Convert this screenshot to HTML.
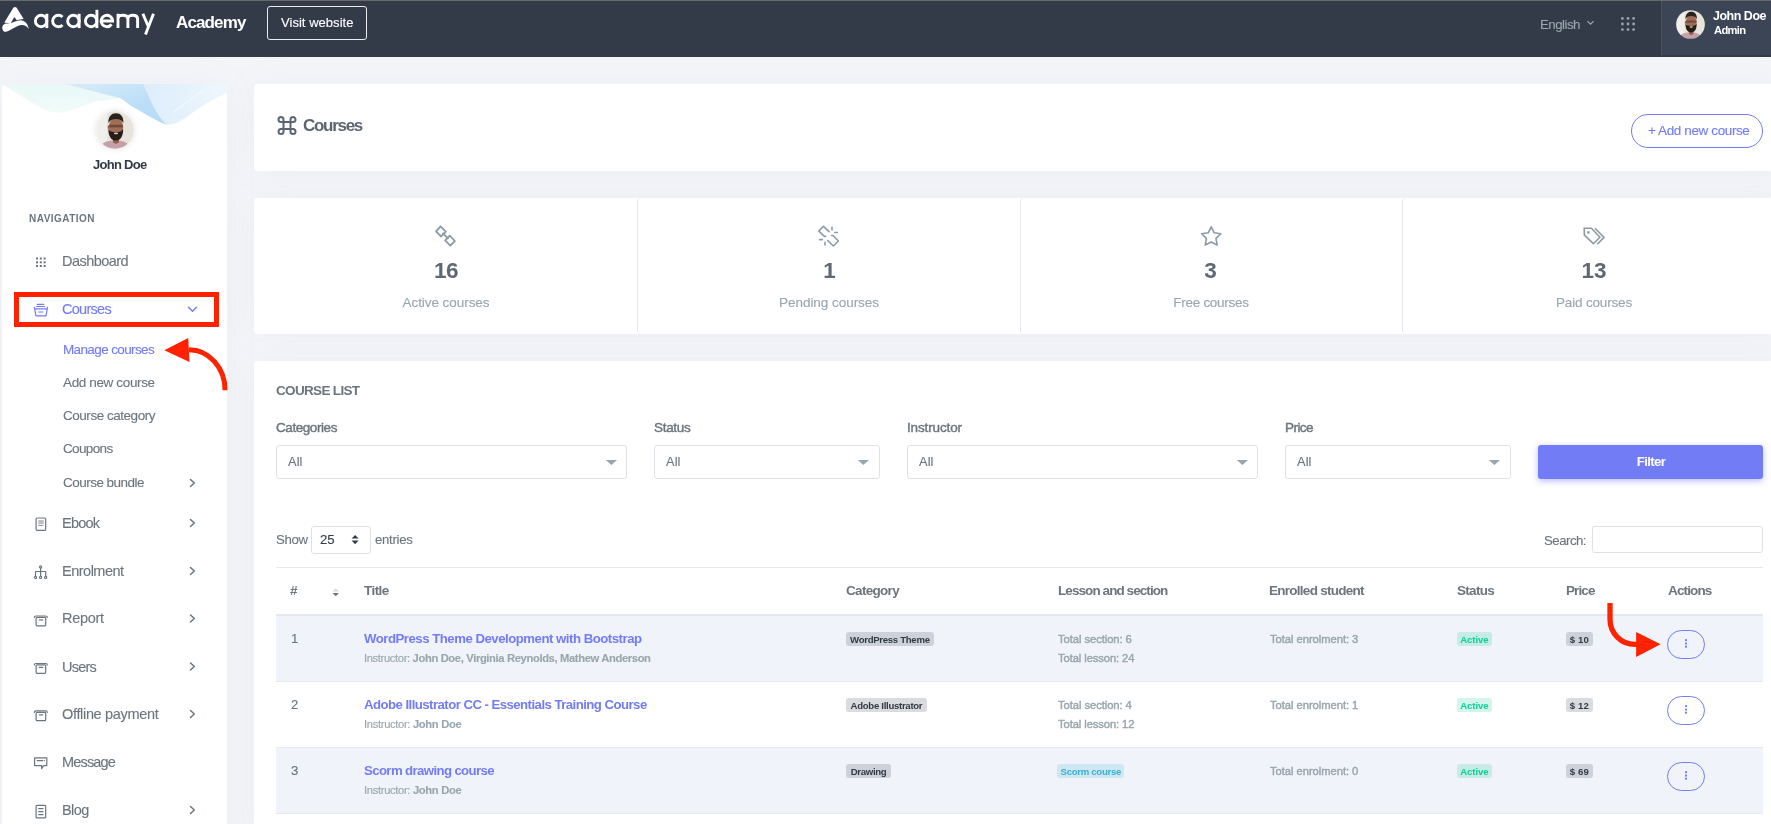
<!DOCTYPE html>
<html><head><meta charset="utf-8"><title>Courses</title>
<style>
html,body{margin:0;padding:0;}
body{width:1771px;height:824px;overflow:hidden;position:relative;background:#f4f5f9;font-family:'Liberation Sans', sans-serif;}
.t{position:absolute;white-space:nowrap;will-change:transform;}
.a{position:absolute;}
</style></head><body>
<!-- header -->
<div class="a" style="left:0;top:0;width:1771px;height:57px;background:#333a48"></div>
<div class="a" style="left:0;top:0;width:1771px;height:1px;background:#6b6866"></div>
<div class="a" style="left:1661px;top:1px;width:110px;height:54px;background:#3c4555;border-left:1px solid #46505f;box-sizing:border-box"></div>
<svg class="a" style="left:0;top:0" width="36" height="36" viewBox="0 0 36 36">
  <path fill="#fff" d="M15 7.1 C16.1 7.1 16.8 7.8 17.4 8.9 L23.7 19.1 C21.2 19.2 18.8 19.7 16.7 20.3 L14.4 16.9 L10.6 23.4 C8.4 23.2 6.3 22.8 4.3 22.6 L12.6 8.9 C13.2 7.8 13.9 7.1 15 7.1 Z"/>
  <path fill="#fff" d="M2.3 28.2 C2.1 25.2 4.2 23.4 7.2 23.5 C12.5 23.7 16.8 20 21.6 20.4 C25.6 20.8 28.2 24.5 28.8 29 C27 26.6 24.6 25 21.6 25.1 C16.6 25.3 11.2 30.6 6.2 31.8 C4.1 32.1 2.5 30.6 2.3 28.2 Z"/>
</svg>
<div class="a" style="left:267px;top:6px;width:100px;height:34px;border:1.3px solid #e9ebef;border-radius:3px;box-sizing:border-box"></div>
<!-- english chevron -->
<svg class="a" style="left:1586px;top:19px" width="10" height="8" viewBox="0 0 10 8"><path d="M1.5 2.3 L4.5 5.2 L7.5 2.3" fill="none" stroke="#98a6ad" stroke-width="1.2"/></svg>
<!-- grid dots -->
<svg class="a" style="left:1618px;top:14px" width="22" height="22" viewBox="0 0 22 22" fill="#98a6ad">
  <circle cx="4.4" cy="4.4" r="1.4"/><circle cx="10" cy="4.4" r="1.4"/><circle cx="15.6" cy="4.4" r="1.4"/>
  <circle cx="4.4" cy="10" r="1.4"/><circle cx="10" cy="10" r="1.4"/><circle cx="15.6" cy="10" r="1.4"/>
  <circle cx="4.4" cy="15.6" r="1.4"/><circle cx="10" cy="15.6" r="1.4"/><circle cx="15.6" cy="15.6" r="1.4"/>
</svg>
<!-- header avatar -->
<svg class="a" style="left:1676px;top:10px" width="29" height="29" viewBox="0 0 38 38">
  <defs><clipPath id="cav1"><circle cx="19" cy="19" r="18.8"/></clipPath><filter id="fav1" x="-5%" y="-5%" width="110%" height="110%"><feGaussianBlur stdDeviation="0.45"/></filter></defs>
  <g clip-path="url(#cav1)"><g filter="url(#fav1)">
    <rect width="38" height="38" fill="#e7e3dd"/>
    <rect x="0" y="0" width="11" height="38" fill="#f1efeb"/>
    <path d="M3 38 C5 32 10 29.5 19 29.5 C28 29.5 33 32 35 38 Z" fill="#c6a0a9"/>
    <path d="M17 27 H23 V31.5 L20 33 L17 31.5 Z" fill="#94644f"/>
    <ellipse cx="20" cy="15.5" rx="7.2" ry="8.6" fill="#a26d56"/>
    <ellipse cx="12.8" cy="16" rx="1.2" ry="2" fill="#9a6650"/>
    <path d="M12.4 12 C12.2 5.5 15.5 2.2 20 2.2 C24.8 2.2 27.6 5.5 27.4 12 C26 9.2 23.5 8 20 8 C16.5 8 13.8 9.2 12.4 12 Z" fill="#2a201c"/>
    <path d="M13.6 13.9 H26.8 V16.4 H13.6 Z" fill="#5a3d31" opacity=".75"/>
    <path d="M12.4 17.5 C12.2 25 15 29.6 19.8 29.6 C24.8 29.6 27.4 25 27.1 17.5 C26 20.6 23.5 21 19.8 21 C16 21 13.4 20.6 12.4 17.5 Z" fill="#2a1d18"/>
    <ellipse cx="20" cy="22.3" rx="2.2" ry="0.9" fill="#ddd3cc"/>
  </g></g>
</svg>

<!-- sidebar card -->
<div class="a" style="left:2px;top:84px;width:225px;height:760px;background:#fff;border-radius:4px;box-shadow:0 0 35px 0 rgba(154,161,171,.07);overflow:hidden">
  <svg class="a" style="left:0;top:0" width="225" height="50" viewBox="2 84 225 50">
    <defs>
      <linearGradient id="gm" x1="0" y1="0" x2="0" y2="1">
        <stop offset="0" stop-color="#e9f8f6"/><stop offset="1" stop-color="#f1fbfa"/>
      </linearGradient>
      <linearGradient id="gb" x1="0" y1="0" x2="1" y2="1">
        <stop offset="0" stop-color="#d9ecfa"/><stop offset=".6" stop-color="#bcdff7"/><stop offset="1" stop-color="#b5dbf6"/>
      </linearGradient>
      <linearGradient id="gl" x1="0" y1="0" x2="1" y2="0">
        <stop offset="0" stop-color="#dcedfb"/><stop offset="1" stop-color="#eef7fd"/>
      </linearGradient>
    </defs>
    <path d="M2 84 L64 84 L120 98 C110 100 102 101 95 101.6 C88 104 80 107.5 74.5 109 C68 111.5 62 113 57.6 112.8 C52 112.5 46 110.5 40.7 107.7 C32 103 26 99 20.3 95.5 C13 91 7 87 2 84 Z" fill="url(#gm)"/>
    <path d="M64 84 L143.6 84 L152 103 C156 111 160 118 166.5 124.6 C163 123.5 159 121.8 156 120 C147 115 139 110.5 131 105.7 C127 103 123.5 100 120 98 Z" fill="url(#gb)"/>
    <path d="M143.6 84 L227 84 L227 93 C219 97 213 100 207 103 C199 108 192 113 186 117.6 C180 121.5 174 124.5 169 124.8 C168 124.8 167 124.7 166.5 124.6 C160 118 156 111 152 103 Z" fill="url(#gl)"/>
    <path d="M173 112.5 C185 104 195 96 204 90" fill="none" stroke="#ffffff" stroke-width=".8" opacity=".8"/>
  </svg>
</div>
<!-- sidebar avatar -->
<div class="a" style="left:96px;top:111px;width:38px;height:38px;border-radius:50%;box-shadow:0 0 6px rgba(0,0,0,.12)"></div>
<svg class="a" style="left:96px;top:111px" width="38" height="38" viewBox="0 0 38 38">
  <defs><clipPath id="cav2"><circle cx="19" cy="19" r="18.8"/></clipPath><filter id="fav2" x="-5%" y="-5%" width="110%" height="110%"><feGaussianBlur stdDeviation="0.45"/></filter></defs>
  <g clip-path="url(#cav2)"><g filter="url(#fav2)">
    <rect width="38" height="38" fill="#e7e3dd"/>
    <rect x="0" y="0" width="11" height="38" fill="#f1efeb"/>
    <path d="M3 38 C5 32 10 29.5 19 29.5 C28 29.5 33 32 35 38 Z" fill="#c6a0a9"/>
    <path d="M17 27 H23 V31.5 L20 33 L17 31.5 Z" fill="#94644f"/>
    <ellipse cx="20" cy="15.5" rx="7.2" ry="8.6" fill="#a26d56"/>
    <ellipse cx="12.8" cy="16" rx="1.2" ry="2" fill="#9a6650"/>
    <path d="M12.4 12 C12.2 5.5 15.5 2.2 20 2.2 C24.8 2.2 27.6 5.5 27.4 12 C26 9.2 23.5 8 20 8 C16.5 8 13.8 9.2 12.4 12 Z" fill="#2a201c"/>
    <path d="M13.6 13.9 H26.8 V16.4 H13.6 Z" fill="#5a3d31" opacity=".75"/>
    <path d="M12.4 17.5 C12.2 25 15 29.6 19.8 29.6 C24.8 29.6 27.4 25 27.1 17.5 C26 20.6 23.5 21 19.8 21 C16 21 13.4 20.6 12.4 17.5 Z" fill="#2a1d18"/>
    <ellipse cx="20" cy="22.3" rx="2.2" ry="0.9" fill="#ddd3cc"/>
  </g></g>
</svg>

<!-- nav icons -->
<svg class="a" style="left:30px;top:250px" width="22" height="580" viewBox="0 0 22 580" fill="none" stroke="#6c757d" stroke-width="1.2" stroke-linecap="round" stroke-linejoin="round">
  <!-- dashboard dots: y offset 250 -->
  <g fill="#6c757d" stroke="none">
    <rect x="6" y="7.5" width="2" height="2"/><rect x="9.8" y="7.5" width="2" height="2"/><rect x="13.6" y="7.5" width="2" height="2"/>
    <rect x="6" y="11.3" width="2" height="2"/><rect x="9.8" y="11.3" width="2" height="2"/><rect x="13.6" y="11.3" width="2" height="2"/>
    <rect x="6" y="15" width="2" height="2"/><rect x="9.8" y="15" width="2" height="2"/><rect x="13.6" y="15" width="2" height="2"/>
  </g>
  <!-- ebook: y 518..530 -->
  <rect x="6.1" y="268" width="9.6" height="12.3" rx="1"/>
  <path d="M8.8 271 H13.3 M8.6 273 H13.5 M8.8 275.4 H11.5 M12.6 275.4 H12.9" stroke-width="0.9"/>
  <!-- enrolment -->
  <circle cx="10.6" cy="317" r="1.1"/>
  <path d="M10.6 318.1 V326.3 M5.5 326.3 V321.5 H15.7 V326.3"/>
  <circle cx="5.5" cy="327.4" r="1.1"/><circle cx="10.6" cy="327.4" r="1.1"/><circle cx="15.7" cy="327.4" r="1.1"/>
  <!-- report -->
  <path d="M4.3 367.5 C4.3 366.4 4.8 366 6 366 H15.6 C16.8 366 17.3 366.4 17.3 367.5"/>
  <rect x="6.1" y="367.4" width="9.6" height="8.4" rx="1"/>
  <path d="M9.3 369.9 H12.7"/>
  <!-- users -->
  <path d="M4.3 415 C4.3 413.9 4.8 413.5 6 413.5 H15.6 C16.8 413.5 17.3 413.9 17.3 415"/>
  <rect x="6.1" y="414.9" width="9.6" height="8.4" rx="1"/>
  <path d="M9.3 417.4 H12.7"/>
  <!-- offline payment -->
  <path d="M4.3 462.4 C4.3 461.3 4.8 460.9 6 460.9 H15.6 C16.8 460.9 17.3 461.3 17.3 462.4"/>
  <rect x="6.1" y="462.3" width="9.6" height="8.4" rx="1"/>
  <path d="M9.3 464.8 H12.7"/>
  <!-- message -->
  <path d="M4.6 507.8 H16.8 V515.6 H13.6 L11.6 518.6 V515.6 H4.6 Z"/>
  <path d="M7.2 510.6 H12.6 M14.2 510.6 H14.4"/>
  <!-- blog -->
  <rect x="6.1" y="555.3" width="9.6" height="12.6" rx="1"/>
  <path d="M8.7 558.6 H13 M8.7 561.7 H13 M8.7 564.7 H13"/>
</svg>
<!-- courses basket icon (purple) -->
<svg class="a" style="left:30px;top:300px" width="22" height="20" viewBox="0 0 22 20" fill="none" stroke="#727cf5" stroke-width="1.2" stroke-linecap="round" stroke-linejoin="round">
  <path d="M7.3 4.4 H13.7 M6.5 6.5 H14.6"/>
  <path d="M4.3 7.3 L4.6 8.8 H17.2 L17.5 7.3 M4.6 8.8 L6 15.8 H16 L17.2 8.8"/>
  <path d="M8.6 12 H12.9"/>
</svg>
<!-- chevrons -->
<svg class="a" style="left:185px;top:300px" width="16" height="200" viewBox="0 0 16 200" fill="none" stroke="#727cf5" stroke-width="1.5" stroke-linecap="round" stroke-linejoin="round">
  <path d="M3.5 7.3 L7.5 11.3 L11.5 7.3"/>
</svg>
<svg class="a" style="left:185px;top:470px" width="16" height="360" viewBox="0 0 16 360" fill="none" stroke="#6c757d" stroke-width="1.5" stroke-linecap="round" stroke-linejoin="round">
  <path d="M5.5 9.5 L9.3 13 L5.5 16.5"/>
  <path d="M5.5 49.5 L9.3 53 L5.5 56.5"/>
  <path d="M5.5 97.5 L9.3 101 L5.5 104.5"/>
  <path d="M5.5 145 L9.3 148.5 L5.5 152"/>
  <path d="M5.5 193 L9.3 196.5 L5.5 200"/>
  <path d="M5.5 240.5 L9.3 244 L5.5 247.5"/>
  <path d="M5.5 336.5 L9.3 340 L5.5 343.5"/>
</svg>
<!-- red box + arrow -->
<div class="a" style="left:14px;top:292px;width:205px;height:35px;border:5px solid #fe2200;box-sizing:border-box"></div>


<!-- main header card -->
<div class="a" style="left:254px;top:84px;width:1530px;height:87px;background:#fff;border-radius:4px;box-shadow:0 0 35px 0 rgba(154,161,171,.07)"></div>
<svg class="a" style="left:276px;top:115px" width="22" height="22" viewBox="0 0 22 22" fill="none" stroke="#5b6672" stroke-width="2">
  <path d="M7.5 7 H14.5 V14 H7.5 Z M7.5 7 V4.5 A2.5 2.5 0 1 0 5 7 Z M14.5 7 V4.5 A2.5 2.5 0 1 1 17 7 Z M14.5 14 V16.5 A2.5 2.5 0 1 0 17 14 Z M7.5 14 V16.5 A2.5 2.5 0 1 1 5 14 Z"/>
</svg>
<div class="a" style="left:1631px;top:114px;width:132px;height:34px;border:1px solid #727cf5;border-radius:17px;box-sizing:border-box"></div>

<!-- stats card -->
<div class="a" style="left:254px;top:198px;width:1530px;height:136px;background:#fff;border-radius:4px;box-shadow:0 0 35px 0 rgba(154,161,171,.07)"></div>
<div class="a" style="left:637px;top:198px;width:8px;height:136px;border-left:1px solid #e3e6ea;border-radius:4px 0 0 4px"></div>
<div class="a" style="left:1020px;top:198px;width:8px;height:136px;border-left:1px solid #e3e6ea;border-radius:4px 0 0 4px"></div>
<div class="a" style="left:1402px;top:198px;width:8px;height:136px;border-left:1px solid #e3e6ea;border-radius:4px 0 0 4px"></div>
<svg class="a" style="left:428px;top:220px" width="34" height="32" viewBox="0 0 34 32" fill="none" stroke="#8d9ba4" stroke-width="1.8" stroke-linejoin="round">
  <path d="M12.6 6.4 L17.8 11.6 L13.2 16.5 L8 11.3 Z"/>
  <path d="M21.7 15.6 L26.9 21 L22.3 25.6 L17.2 20.4 Z"/>
  <path d="M14.6 12.8 L20.4 18.8"/>
</svg>
<svg class="a" style="left:812px;top:220px" width="34" height="32" viewBox="0 0 34 32" fill="none" stroke="#8d9ba4" stroke-width="1.6" stroke-linejoin="round" stroke-linecap="round">
  <path d="M17 11.6 L11.45 6.3 L6.8 11.1 L12.4 16.4 H13.6"/>
  <path d="M19.6 15.5 H21 L26.4 21 L21.4 26 L15.8 20.6"/>
  <path d="M20 7.2 V9.9 M22.7 12.5 H25.4 M7.6 19.6 H10.3 M13 22.3 V25"/>
</svg>
<svg class="a" style="left:1194px;top:220px" width="34" height="32" viewBox="0 0 34 32">
  <g transform="translate(5.68 4.88) scale(0.96)">
  <path d="M12 2 L15.09 8.26 L22 9.27 L17 14.14 L18.18 21.02 L12 17.77 L5.82 21.02 L7 14.14 L2 9.27 L8.91 8.26 Z" fill="none" stroke="#8d9ba4" stroke-width="1.7" stroke-linejoin="round"/>
  </g>
</svg>
<svg class="a" style="left:1576px;top:220px" width="34" height="32" viewBox="0 0 34 32" fill="none" stroke="#8d9ba4" stroke-width="1.6" stroke-linejoin="miter">
  <path d="M8.2 8.2 H15.4 L23.9 17.2 L17.4 23.7 L8.4 15.1 Z"/>
  <circle cx="12.4" cy="12.4" r="1.3" fill="#8d9ba4" stroke="none"/>
  <path d="M19 8.2 L28 17.4 L21.2 24.2"/>
</svg>

<!-- course list card -->
<div class="a" style="left:254px;top:361px;width:1530px;height:480px;background:#fff;border-radius:4px;box-shadow:0 0 35px 0 rgba(154,161,171,.07)"></div>
<!-- selects -->
<div class="a" style="left:276px;top:445px;width:351px;height:34px;border:1px solid #dee2e6;border-radius:3px;box-sizing:border-box"></div>
<div class="a" style="left:654px;top:445px;width:226px;height:34px;border:1px solid #dee2e6;border-radius:3px;box-sizing:border-box"></div>
<div class="a" style="left:907px;top:445px;width:351px;height:34px;border:1px solid #dee2e6;border-radius:3px;box-sizing:border-box"></div>
<div class="a" style="left:1285px;top:445px;width:226px;height:34px;border:1px solid #dee2e6;border-radius:3px;box-sizing:border-box"></div>
<svg class="a" style="left:0;top:455px" width="1771" height="14" viewBox="0 0 1771 14" fill="#98a6ad">
  <path d="M605.8 5 H617 L611.4 10 Z"/>
  <path d="M857.8 5 H869 L863.4 10 Z"/>
  <path d="M1236.8 5 H1248 L1242.4 10 Z"/>
  <path d="M1488.8 5 H1500 L1494.4 10 Z"/>
</svg>
<div class="a" style="left:1538px;top:445px;width:225px;height:34px;background:#727cf5;border-radius:3px;box-shadow:0 2px 6px 0 rgba(114,124,245,.5)"></div>
<!-- show select -->
<div class="a" style="left:311px;top:526px;width:60px;height:28px;border:1px solid #dee2e6;border-radius:3px;box-sizing:border-box"></div>
<svg class="a" style="left:348px;top:532px" width="14" height="16" viewBox="0 0 14 16" fill="#313a46">
  <path d="M3.6 6.6 H10.6 L7.1 3 Z"/><path d="M3.6 8.6 H10.6 L7.1 12.2 Z"/>
</svg>
<div class="a" style="left:1592px;top:526px;width:171px;height:27px;border:1px solid #dee2e6;border-radius:3px;box-sizing:border-box"></div>

<!-- table -->
<div class="a" style="left:276px;top:567px;width:1487px;height:1px;background:#e6eaf0"></div>
<div class="a" style="left:276px;top:614px;width:1487px;height:2px;background:#e3e7ee"></div>
<div class="a" style="left:276px;top:616px;width:1487px;height:65px;background:#f1f3fa"></div>
<div class="a" style="left:276px;top:681px;width:1487px;height:1px;background:#e6eaf0"></div>
<div class="a" style="left:276px;top:747px;width:1487px;height:1px;background:#e6eaf0"></div>
<div class="a" style="left:276px;top:748px;width:1487px;height:65px;background:#f1f3fa"></div>
<div class="a" style="left:276px;top:813px;width:1487px;height:1px;background:#e6eaf0"></div>
<svg class="a" style="left:330px;top:585px" width="12" height="14" viewBox="0 0 12 14">
  <path d="M2.5 6.5 H9 L5.75 3.3 Z" fill="#d8dce2"/><path d="M2.5 8 H9 L5.75 11.3 Z" fill="#6c757d"/>
</svg>

<div class="t" style="left:175.5px;top:14.00px;font-size:17px;line-height:17px;font-weight:700;color:#ffffff;letter-spacing:-0.873px;">Academy</div>
<div class="t" style="left:280.5px;top:16.20px;font-size:13px;line-height:13px;font-weight:400;color:#ffffff;-webkit-text-stroke:0.12px currentColor;letter-spacing:0.037px;">Visit website</div>
<div class="t" style="left:1540.0px;top:17.85px;font-size:13.3px;line-height:13.3px;font-weight:400;color:#98a6ad;-webkit-text-stroke:0.12px currentColor;letter-spacing:-0.518px;">English</div>
<div class="t" style="left:1713.0px;top:9.55px;font-size:12.5px;line-height:12.5px;font-weight:700;color:#ffffff;letter-spacing:-0.494px;">John Doe</div>
<div class="t" style="left:1714.0px;top:25.10px;font-size:11.2px;line-height:11.2px;font-weight:700;color:#ffffff;letter-spacing:-0.683px;">Admin</div>
<div class="t" style="left:93.0px;top:158.00px;font-size:13px;line-height:13px;font-weight:700;color:#313a46;letter-spacing:-0.717px;">John Doe</div>
<div class="t" style="left:29.3px;top:213.50px;font-size:10px;line-height:10px;font-weight:700;color:#6c757d;letter-spacing:0.470px;">NAVIGATION</div>
<div class="t" style="left:62.4px;top:254.05px;font-size:14.5px;line-height:14.5px;font-weight:400;color:#6c757d;-webkit-text-stroke:0.12px currentColor;letter-spacing:-0.549px;">Dashboard</div>
<div class="t" style="left:62.2px;top:301.75px;font-size:14.5px;line-height:14.5px;font-weight:400;color:#727cf5;-webkit-text-stroke:0.12px currentColor;letter-spacing:-0.714px;">Courses</div>
<div class="t" style="left:63.3px;top:343.15px;font-size:13.5px;line-height:13.5px;font-weight:400;color:#727cf5;-webkit-text-stroke:0.12px currentColor;letter-spacing:-0.629px;">Manage courses</div>
<div class="t" style="left:63.3px;top:375.95px;font-size:13.5px;line-height:13.5px;font-weight:400;color:#6c757d;-webkit-text-stroke:0.12px currentColor;letter-spacing:-0.365px;">Add new course</div>
<div class="t" style="left:63.3px;top:408.75px;font-size:13.5px;line-height:13.5px;font-weight:400;color:#6c757d;-webkit-text-stroke:0.12px currentColor;letter-spacing:-0.471px;">Course category</div>
<div class="t" style="left:63.3px;top:441.75px;font-size:13.5px;line-height:13.5px;font-weight:400;color:#6c757d;-webkit-text-stroke:0.12px currentColor;letter-spacing:-0.635px;">Coupons</div>
<div class="t" style="left:63.3px;top:475.75px;font-size:13.5px;line-height:13.5px;font-weight:400;color:#6c757d;-webkit-text-stroke:0.12px currentColor;letter-spacing:-0.524px;">Course bundle</div>
<div class="t" style="left:62.3px;top:515.95px;font-size:14.5px;line-height:14.5px;font-weight:400;color:#6c757d;-webkit-text-stroke:0.12px currentColor;letter-spacing:-0.765px;">Ebook</div>
<div class="t" style="left:62.3px;top:563.75px;font-size:14.5px;line-height:14.5px;font-weight:400;color:#6c757d;-webkit-text-stroke:0.12px currentColor;letter-spacing:-0.499px;">Enrolment</div>
<div class="t" style="left:62.3px;top:611.45px;font-size:14.5px;line-height:14.5px;font-weight:400;color:#6c757d;-webkit-text-stroke:0.12px currentColor;letter-spacing:-0.322px;">Report</div>
<div class="t" style="left:62.3px;top:660.15px;font-size:14.5px;line-height:14.5px;font-weight:400;color:#6c757d;-webkit-text-stroke:0.12px currentColor;letter-spacing:-0.775px;">Users</div>
<div class="t" style="left:62.3px;top:706.95px;font-size:14.5px;line-height:14.5px;font-weight:400;color:#6c757d;-webkit-text-stroke:0.12px currentColor;letter-spacing:-0.326px;">Offline payment</div>
<div class="t" style="left:62.3px;top:754.95px;font-size:14.5px;line-height:14.5px;font-weight:400;color:#6c757d;-webkit-text-stroke:0.12px currentColor;letter-spacing:-0.835px;">Message</div>
<div class="t" style="left:62.3px;top:802.95px;font-size:14.5px;line-height:14.5px;font-weight:400;color:#6c757d;-webkit-text-stroke:0.12px currentColor;letter-spacing:-0.558px;">Blog</div>
<div class="t" style="left:303.0px;top:116.80px;font-size:17px;line-height:17px;font-weight:700;color:#5b6672;letter-spacing:-1.290px;">Courses</div>
<div class="t" style="left:1647.5px;top:124.15px;font-size:13.5px;line-height:13.5px;font-weight:400;color:#727cf5;-webkit-text-stroke:0.12px currentColor;letter-spacing:-0.388px;">+ Add new course</div>
<div class="t" style="left:445.5px;top:260.45px;font-size:22.5px;line-height:22.5px;font-weight:700;color:#5d6874;letter-spacing:-0.516px;transform:translateX(-50%);">16</div>
<div class="t" style="left:445.5px;top:295.55px;font-size:13.5px;line-height:13.5px;font-weight:400;color:#98a6ad;-webkit-text-stroke:0.12px currentColor;letter-spacing:-0.057px;transform:translateX(-50%);">Active courses</div>
<div class="t" style="left:828.5px;top:260.45px;font-size:22.5px;line-height:22.5px;font-weight:700;color:#5d6874;letter-spacing:-1.116px;transform:translateX(-50%);">1</div>
<div class="t" style="left:828.5px;top:295.55px;font-size:13.5px;line-height:13.5px;font-weight:400;color:#98a6ad;-webkit-text-stroke:0.12px currentColor;letter-spacing:-0.039px;transform:translateX(-50%);">Pending courses</div>
<div class="t" style="left:1211.0px;top:260.45px;font-size:22.5px;line-height:22.5px;font-weight:700;color:#5d6874;letter-spacing:0.884px;transform:translateX(-50%);">3</div>
<div class="t" style="left:1211.0px;top:295.55px;font-size:13.5px;line-height:13.5px;font-weight:400;color:#98a6ad;-webkit-text-stroke:0.12px currentColor;letter-spacing:-0.265px;transform:translateX(-50%);">Free courses</div>
<div class="t" style="left:1593.5px;top:260.45px;font-size:22.5px;line-height:22.5px;font-weight:700;color:#5d6874;letter-spacing:-0.016px;transform:translateX(-50%);">13</div>
<div class="t" style="left:1593.5px;top:295.55px;font-size:13.5px;line-height:13.5px;font-weight:400;color:#98a6ad;-webkit-text-stroke:0.12px currentColor;letter-spacing:-0.171px;transform:translateX(-50%);">Paid courses</div>
<div class="t" style="left:276.0px;top:384.05px;font-size:13.5px;line-height:13.5px;font-weight:700;color:#6c757d;letter-spacing:-0.670px;">COURSE LIST</div>
<div class="t" style="left:276.0px;top:420.75px;font-size:13.5px;line-height:13.5px;font-weight:400;color:#6c757d;-webkit-text-stroke:0.42px currentColor;letter-spacing:-0.430px;">Categories</div>
<div class="t" style="left:654.3px;top:420.75px;font-size:13.5px;line-height:13.5px;font-weight:400;color:#6c757d;-webkit-text-stroke:0.42px currentColor;letter-spacing:-0.297px;">Status</div>
<div class="t" style="left:907.3px;top:420.75px;font-size:13.5px;line-height:13.5px;font-weight:400;color:#6c757d;-webkit-text-stroke:0.42px currentColor;letter-spacing:-0.128px;">Instructor</div>
<div class="t" style="left:1285.3px;top:420.75px;font-size:13.5px;line-height:13.5px;font-weight:400;color:#6c757d;-webkit-text-stroke:0.42px currentColor;letter-spacing:-0.553px;">Price</div>
<div class="t" style="left:287.6px;top:455.50px;font-size:12.8px;line-height:12.8px;font-weight:400;color:#6c757d;-webkit-text-stroke:0.12px currentColor;letter-spacing:0.122px;">All</div>
<div class="t" style="left:666.0px;top:455.50px;font-size:12.8px;line-height:12.8px;font-weight:400;color:#6c757d;-webkit-text-stroke:0.12px currentColor;letter-spacing:0.122px;">All</div>
<div class="t" style="left:919.0px;top:455.50px;font-size:12.8px;line-height:12.8px;font-weight:400;color:#6c757d;-webkit-text-stroke:0.12px currentColor;letter-spacing:0.122px;">All</div>
<div class="t" style="left:1297.0px;top:455.50px;font-size:12.8px;line-height:12.8px;font-weight:400;color:#6c757d;-webkit-text-stroke:0.12px currentColor;letter-spacing:0.122px;">All</div>
<div class="t" style="left:1650.6px;top:454.85px;font-size:13.3px;line-height:13.3px;font-weight:700;color:#ffffff;letter-spacing:-0.703px;transform:translateX(-50%);">Filter</div>
<div class="t" style="left:275.9px;top:533.00px;font-size:13.2px;line-height:13.2px;font-weight:400;color:#6c757d;-webkit-text-stroke:0.12px currentColor;letter-spacing:-0.325px;">Show</div>
<div class="t" style="left:319.9px;top:533.00px;font-size:13.2px;line-height:13.2px;font-weight:400;color:#313a46;-webkit-text-stroke:0.12px currentColor;letter-spacing:-0.086px;">25</div>
<div class="t" style="left:374.5px;top:533.00px;font-size:13.2px;line-height:13.2px;font-weight:400;color:#6c757d;-webkit-text-stroke:0.12px currentColor;letter-spacing:-0.299px;">entries</div>
<div class="t" style="left:1544.0px;top:533.90px;font-size:13.2px;line-height:13.2px;font-weight:400;color:#6c757d;-webkit-text-stroke:0.12px currentColor;letter-spacing:-0.493px;">Search:</div>
<div class="t" style="left:289.9px;top:583.85px;font-size:13.5px;line-height:13.5px;font-weight:700;color:#6c757d;letter-spacing:-0.516px;">#</div>
<div class="t" style="left:364.3px;top:583.85px;font-size:13.5px;line-height:13.5px;font-weight:700;color:#6c757d;letter-spacing:-0.563px;">Title</div>
<div class="t" style="left:846.1px;top:583.85px;font-size:13.5px;line-height:13.5px;font-weight:700;color:#6c757d;letter-spacing:-0.689px;">Category</div>
<div class="t" style="left:1057.6px;top:583.85px;font-size:13.5px;line-height:13.5px;font-weight:700;color:#6c757d;letter-spacing:-0.924px;">Lesson and section</div>
<div class="t" style="left:1269.4px;top:583.85px;font-size:13.5px;line-height:13.5px;font-weight:700;color:#6c757d;letter-spacing:-0.732px;">Enrolled student</div>
<div class="t" style="left:1457.2px;top:583.85px;font-size:13.5px;line-height:13.5px;font-weight:700;color:#6c757d;letter-spacing:-0.711px;">Status</div>
<div class="t" style="left:1566.2px;top:583.85px;font-size:13.5px;line-height:13.5px;font-weight:700;color:#6c757d;letter-spacing:-0.886px;">Price</div>
<div class="t" style="left:1667.5px;top:583.85px;font-size:13.5px;line-height:13.5px;font-weight:700;color:#6c757d;letter-spacing:-0.859px;">Actions</div>
<div class="t" style="left:290.8px;top:632.30px;font-size:13.2px;line-height:13.2px;font-weight:400;color:#6c757d;-webkit-text-stroke:0.12px currentColor;">1</div>
<div class="t" style="left:364.4px;top:632.30px;font-size:13.2px;line-height:13.2px;font-weight:700;color:#727cf5;letter-spacing:-0.486px;">WordPress Theme Development with Bootstrap</div>
<div class="t" style="left:364.4px;top:653.00px;font-size:11.2px;line-height:11.2px;font-weight:400;color:#98a6ad;-webkit-text-stroke:0.12px currentColor;letter-spacing:-0.355px;">Instructor: <b style="font-weight:700">John Doe, Virginia Reynolds, Mathew Anderson</b></div>
<div class="t" style="left:1057.6px;top:633.50px;font-size:11.2px;line-height:11.2px;font-weight:400;color:#98a6ad;-webkit-text-stroke:0.42px currentColor;letter-spacing:-0.052px;">Total section: 6</div>
<div class="t" style="left:1057.6px;top:652.90px;font-size:11.2px;line-height:11.2px;font-weight:400;color:#98a6ad;-webkit-text-stroke:0.42px currentColor;letter-spacing:-0.084px;">Total lesson: 24</div>
<div class="t" style="left:1269.5px;top:633.50px;font-size:11.2px;line-height:11.2px;font-weight:400;color:#98a6ad;-webkit-text-stroke:0.42px currentColor;letter-spacing:-0.035px;">Total enrolment: 3</div>
<div class="t" style="left:290.8px;top:698.30px;font-size:13.2px;line-height:13.2px;font-weight:400;color:#6c757d;-webkit-text-stroke:0.12px currentColor;">2</div>
<div class="t" style="left:364.4px;top:698.30px;font-size:13.2px;line-height:13.2px;font-weight:700;color:#727cf5;letter-spacing:-0.542px;">Adobe Illustrator CC - Essentials Training Course</div>
<div class="t" style="left:364.4px;top:719.00px;font-size:11.2px;line-height:11.2px;font-weight:400;color:#98a6ad;-webkit-text-stroke:0.12px currentColor;letter-spacing:-0.326px;">Instructor: <b style="font-weight:700">John Doe</b></div>
<div class="t" style="left:1057.6px;top:699.50px;font-size:11.2px;line-height:11.2px;font-weight:400;color:#98a6ad;-webkit-text-stroke:0.42px currentColor;letter-spacing:-0.052px;">Total section: 4</div>
<div class="t" style="left:1057.6px;top:718.90px;font-size:11.2px;line-height:11.2px;font-weight:400;color:#98a6ad;-webkit-text-stroke:0.42px currentColor;letter-spacing:-0.084px;">Total lesson: 12</div>
<div class="t" style="left:1269.5px;top:699.50px;font-size:11.2px;line-height:11.2px;font-weight:400;color:#98a6ad;-webkit-text-stroke:0.42px currentColor;letter-spacing:-0.035px;">Total enrolment: 1</div>
<div class="t" style="left:290.8px;top:764.30px;font-size:13.2px;line-height:13.2px;font-weight:400;color:#6c757d;-webkit-text-stroke:0.12px currentColor;">3</div>
<div class="t" style="left:364.4px;top:764.30px;font-size:13.2px;line-height:13.2px;font-weight:700;color:#727cf5;letter-spacing:-0.609px;">Scorm drawing course</div>
<div class="t" style="left:364.4px;top:785.00px;font-size:11.2px;line-height:11.2px;font-weight:400;color:#98a6ad;-webkit-text-stroke:0.12px currentColor;letter-spacing:-0.326px;">Instructor: <b style="font-weight:700">John Doe</b></div>
<div class="t" style="left:1269.5px;top:765.50px;font-size:11.2px;line-height:11.2px;font-weight:400;color:#98a6ad;-webkit-text-stroke:0.42px currentColor;letter-spacing:-0.035px;">Total enrolment: 0</div>
<svg class="a" style="left:0;top:0" width="170" height="40" viewBox="0 0 170 40" fill="none" stroke="#fff" stroke-width="2.9">
  <circle cx="41.1" cy="21" r="5.75"/><path d="M46.85 13.8 V28.1"/>
  <path d="M62.5 17.0 A5.75 5.75 0 1 0 62.5 25.0"/>
  <circle cx="73.4" cy="21" r="5.75"/><path d="M79.15 13.8 V28.1"/>
  <circle cx="91.15" cy="21" r="5.75"/><path d="M96.9 9.8 V28.1"/>
  <path d="M101.1 21 H112.6 A5.75 5.75 0 1 0 111.56 24.3"/>
  <path d="M118 13.8 V28.1 M118 19.2 C118 16.4 119.8 15.2 122.9 15.2 C126 15.2 127.9 16.4 127.9 19.2 V28.1 M127.9 19.2 C127.9 16.4 129.8 15.2 132.8 15.2 C135.9 15.2 137.6 16.4 137.6 19.2 V28.1"/>
  <path d="M142.9 13.8 L148.4 26.8 M153.5 13.8 L145.5 34.6"/>
</svg>
<div class="a" style="will-change:transform;left:846.2px;top:632.2px;width:87.5px;height:13.6px;background:rgba(49,58,70,.18);border-radius:3px;color:#313a46;font-size:9.6px;font-weight:700;line-height:13.6px;text-align:center;white-space:nowrap;letter-spacing:-0.3px;text-indent:0.3px"><span style="position:relative;top:1.3px">WordPress Theme</span></div>
<div class="a" style="will-change:transform;left:846.2px;top:698.2px;width:80.6px;height:13.6px;background:rgba(49,58,70,.18);border-radius:3px;color:#313a46;font-size:9.6px;font-weight:700;line-height:13.6px;text-align:center;white-space:nowrap;letter-spacing:-0.3px;text-indent:0.3px"><span style="position:relative;top:1.3px">Adobe Illustrator</span></div>
<div class="a" style="will-change:transform;left:846.2px;top:764.4px;width:44.8px;height:13.6px;background:rgba(49,58,70,.18);border-radius:3px;color:#313a46;font-size:9.6px;font-weight:700;line-height:13.6px;text-align:center;white-space:nowrap;letter-spacing:-0.3px;text-indent:0.3px"><span style="position:relative;top:1.3px">Drawing</span></div>
<div class="a" style="will-change:transform;left:1056.6px;top:764.4px;width:67.3px;height:13.6px;background:rgba(57,175,209,.18);border-radius:3px;color:#39afd1;font-size:9.6px;font-weight:700;line-height:13.6px;text-align:center;white-space:nowrap;letter-spacing:-0.3px;text-indent:0.3px"><span style="position:relative;top:1.3px">Scorm course</span></div>
<div class="a" style="will-change:transform;left:1457.2px;top:632.2px;width:34.6px;height:13.6px;background:rgba(10,207,151,.18);border-radius:3px;color:#0acf97;font-size:9.6px;font-weight:700;line-height:13.6px;text-align:center;white-space:nowrap;letter-spacing:-0.1px;text-indent:0.1px"><span style="position:relative;top:1.3px">Active</span></div>
<div class="a" style="will-change:transform;left:1566.2px;top:632.2px;width:26.8px;height:13.6px;background:rgba(49,58,70,.18);border-radius:3px;color:#313a46;font-size:9.6px;font-weight:700;line-height:13.6px;text-align:center;white-space:nowrap;letter-spacing:0.1px;text-indent:-0.1px"><span style="position:relative;top:1.3px">$ 10</span></div>
<div class="a" style="will-change:transform;left:1457.2px;top:698.2px;width:34.6px;height:13.6px;background:rgba(10,207,151,.18);border-radius:3px;color:#0acf97;font-size:9.6px;font-weight:700;line-height:13.6px;text-align:center;white-space:nowrap;letter-spacing:-0.1px;text-indent:0.1px"><span style="position:relative;top:1.3px">Active</span></div>
<div class="a" style="will-change:transform;left:1566.2px;top:698.2px;width:26.8px;height:13.6px;background:rgba(49,58,70,.18);border-radius:3px;color:#313a46;font-size:9.6px;font-weight:700;line-height:13.6px;text-align:center;white-space:nowrap;letter-spacing:0.1px;text-indent:-0.1px"><span style="position:relative;top:1.3px">$ 12</span></div>
<div class="a" style="will-change:transform;left:1457.2px;top:764.4px;width:34.6px;height:13.6px;background:rgba(10,207,151,.18);border-radius:3px;color:#0acf97;font-size:9.6px;font-weight:700;line-height:13.6px;text-align:center;white-space:nowrap;letter-spacing:-0.1px;text-indent:0.1px"><span style="position:relative;top:1.3px">Active</span></div>
<div class="a" style="will-change:transform;left:1566.2px;top:764.4px;width:26.8px;height:13.6px;background:rgba(49,58,70,.18);border-radius:3px;color:#313a46;font-size:9.6px;font-weight:700;line-height:13.6px;text-align:center;white-space:nowrap;letter-spacing:0.1px;text-indent:-0.1px"><span style="position:relative;top:1.3px">$ 69</span></div>
<div class="a" style="left:1667px;top:629.8px;width:38px;height:29px;border:1px solid #727cf5;border-radius:15px;box-sizing:border-box"></div>
<svg class="a" style="left:1683px;top:637.8px" width="6" height="14" viewBox="0 0 6 14" fill="#727cf5"><rect x="2" y="1.2" width="2" height="1.9"/><rect x="2" y="4.6" width="2" height="1.9"/><rect x="2" y="7.7" width="2" height="1.9"/></svg>
<div class="a" style="left:1667px;top:695.8px;width:38px;height:29px;border:1px solid #727cf5;border-radius:15px;box-sizing:border-box"></div>
<svg class="a" style="left:1683px;top:703.8px" width="6" height="14" viewBox="0 0 6 14" fill="#727cf5"><rect x="2" y="1.2" width="2" height="1.9"/><rect x="2" y="4.6" width="2" height="1.9"/><rect x="2" y="7.7" width="2" height="1.9"/></svg>
<div class="a" style="left:1667px;top:761.8px;width:38px;height:29px;border:1px solid #727cf5;border-radius:15px;box-sizing:border-box"></div>
<svg class="a" style="left:1683px;top:769.8px" width="6" height="14" viewBox="0 0 6 14" fill="#727cf5"><rect x="2" y="1.2" width="2" height="1.9"/><rect x="2" y="4.6" width="2" height="1.9"/><rect x="2" y="7.7" width="2" height="1.9"/></svg>
<svg class="a" style="left:0;top:0;pointer-events:none" width="1771" height="824" viewBox="0 0 1771 824">
  <path d="M189 349.8 A36 40.2 0 0 1 225 390.3" fill="none" stroke="#fe2200" stroke-width="5"/>
  <path d="M164.3 350.2 L188.2 338 L189.5 361.9 Z" fill="#fe2200"/>
  <path d="M1610 603 V619.5 A24.8 24.8 0 0 0 1634.8 644.3 H1638" fill="none" stroke="#fe2200" stroke-width="5.3"/>
  <path d="M1636.1 632 L1660.6 644.2 L1636.1 657 Z" fill="#fe2200"/>
</svg>
</body></html>
